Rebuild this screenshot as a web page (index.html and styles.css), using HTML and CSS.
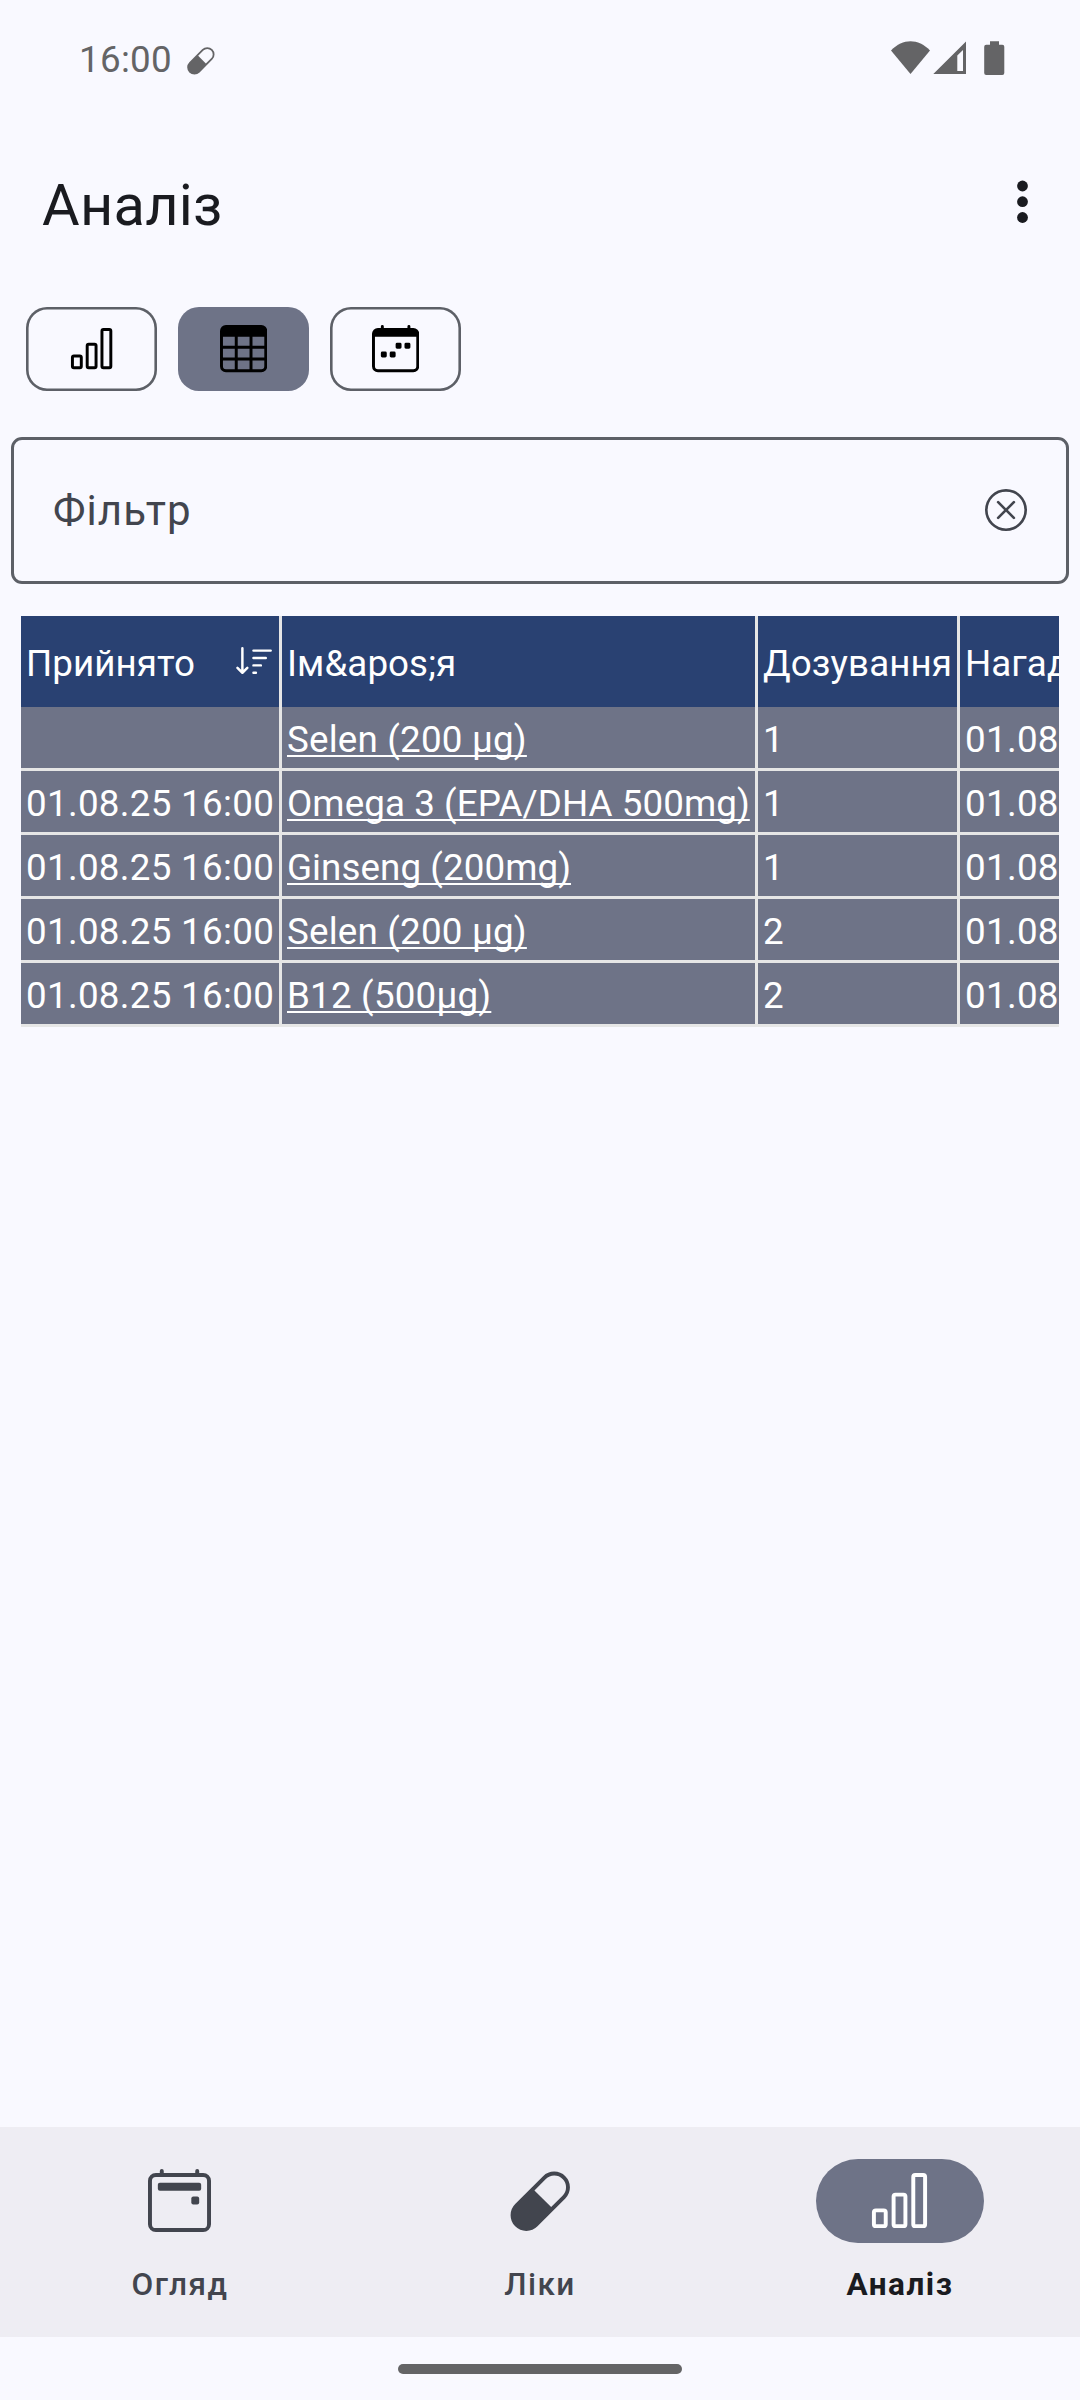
FILE: index.html
```html
<!DOCTYPE html>
<html lang="uk">
<head>
<meta charset="utf-8">
<title>Аналіз</title>
<link rel="stylesheet" href="styles.css">
</head>
<body>
<div class="screen">
  <div class="status-bar">
    <span class="clock">16:00</span>
    <svg class="status-pill" viewBox="0 0 16 16"><path d="M1.828 8.9 8.9 1.827a4 4 0 1 1 5.657 5.657l-7.07 7.071A4 4 0 1 1 1.827 8.9Zm9.128.771 2.893-2.893a3 3 0 1 0-4.243-4.242L6.713 5.429z"/></svg>
    <svg class="status-icons" viewBox="0 0 116 36">
      <path d="M0 9.5C12-2.7 27-2.7 39 9.5L19.5 33Z"/>
      <path fill-rule="evenodd" d="M42.3 33 75 0.500V33ZM66.300 14.500V30H72V9Z"/>
      <path d="M99 0.300h9V3.700h3.300a2 2 0 0 1 2 2V32a2 2 0 0 1-2 2H95.200a2 2 0 0 1-2-2V5.700a2 2 0 0 1 2-2H99Z"/>
    </svg>
  </div>

  <header class="app-bar">
    <h1 class="title">Аналіз</h1>
    <svg class="more" viewBox="0 0 12 44"><circle cx="5.500" cy="6" r="5.4"/><circle cx="5.500" cy="21.700" r="5.4"/><circle cx="5.500" cy="37.500" r="5.4"/></svg>
  </header>

  <div class="chips">
    <div class="chip">
      <svg class="chip-icon" viewBox="0 0 16 16"><g class="outline"><rect x="1.5" y="10.5" width="3" height="4" rx=".5"/><rect x="6.5" y="6.500" width="3" height="8" rx=".5"/><rect x="11.5" y="1.5" width="3" height="13" rx=".5"/></g></svg>
    </div>
    <div class="chip chip-selected">
      <svg class="chip-icon" viewBox="0 0 16 16"><path fill-rule="evenodd" d="M2 0h12a2 2 0 0 1 2 2v12a2 2 0 0 1-2 2H2a2 2 0 0 1-2-2V2a2 2 0 0 1 2-2ZM1 4v3h4V4ZM6 4v3h4V4ZM11 4v3h4V4ZM1 8v3h4V8ZM6 8v3h4V8ZM11 8v3h4V8ZM1 12v2a1 1 0 0 0 1 1h3v-3ZM6 12v3h4v-3ZM11 12v3h3a1 1 0 0 0 1-1v-2Z"/></svg>
    </div>
    <div class="chip">
      <svg class="chip-icon" viewBox="0 0 16 16"><path d="M11 6.500a.5.5 0 0 1 .5-.5h1a.5.5 0 0 1 .5.5v1a.5.5 0 0 1-.5.5h-1a.5.5 0 0 1-.5-.5zm-3 0a.5.5 0 0 1 .5-.5h1a.5.5 0 0 1 .5.5v1a.5.5 0 0 1-.5.5h-1a.5.5 0 0 1-.5-.5zm-5 3a.5.5 0 0 1 .5-.5h1a.5.5 0 0 1 .5.5v1a.5.5 0 0 1-.5.5h-1a.5.5 0 0 1-.5-.5zm3 0a.5.5 0 0 1 .5-.5h1a.5.5 0 0 1 .5.5v1a.5.5 0 0 1-.5.5h-1a.5.5 0 0 1-.5-.5z"/><path d="M3.5 0a.5.5 0 0 1 .5.5V1h8V.5a.5.5 0 0 1 1 0V1h1a2 2 0 0 1 2 2v11a2 2 0 0 1-2 2H2a2 2 0 0 1-2-2V3a2 2 0 0 1 2-2h1V.5a.5.5 0 0 1 .5-.5M1 4v10a1 1 0 0 0 1 1h12a1 1 0 0 0 1-1V4z"/></svg>
    </div>
  </div>

  <div class="filter">
    <span class="filter-label">Фільтр</span>
    <svg class="filter-clear" viewBox="0 0 16 16"><path d="M8 15A7 7 0 1 1 8 1a7 7 0 0 1 0 14m0 1A8 8 0 1 0 8 0a8 8 0 0 0 0 16"/><path d="M4.646 4.646a.5.5 0 0 1 .708 0L8 7.293l2.646-2.647a.5.5 0 0 1 .708.708L8.707 8l2.647 2.646a.5.5 0 0 1-.708.708L8 8.707l-2.646 2.647a.5.5 0 0 1-.708-.708L7.293 8 4.646 5.354a.5.5 0 0 1 0-.708"/></svg>
  </div>

  <div class="table">
    <div class="row head">
      <div class="cell"><span>Прийнято</span><svg class="sort" viewBox="0 0 16 16"><path d="M3.500 2.500a.5.5 0 0 0-1 0v8.793l-1.146-1.147a.5.5 0 0 0-.708.708l2 1.999.007.007a.497.497 0 0 0 .7-.006l2-2a.5.5 0 0 0-.707-.708L3.500 11.293zm3.500 1a.5.5 0 0 1 .5-.5h7a.5.5 0 0 1 0 1h-7a.5.5 0 0 1-.5-.5M7.500 6a.5.5 0 0 0 0 1h5a.5.5 0 0 0 0-1zm0 3a.5.5 0 0 0 0 1h3a.5.5 0 0 0 0-1zm0 3a.5.5 0 0 0 0 1h1a.5.5 0 0 0 0-1z"/></svg></div>
      <div class="cell">Ім&amp;apos;я</div>
      <div class="cell dose-title">Дозування</div>
      <div class="cell">Нагадування</div>
    </div>
    <div class="row"><div class="cell"></div><div class="cell"><span class="link wide">Selen (200 µg)</span></div><div class="cell">1</div><div class="cell date">01.08</div></div>
    <div class="row"><div class="cell date">01.08.25 16:00</div><div class="cell"><span class="link">Omega 3 (EPA/DHA 500mg)</span></div><div class="cell">1</div><div class="cell date">01.08</div></div>
    <div class="row"><div class="cell date">01.08.25 16:00</div><div class="cell"><span class="link">Ginseng (200mg)</span></div><div class="cell">1</div><div class="cell date">01.08</div></div>
    <div class="row"><div class="cell date">01.08.25 16:00</div><div class="cell"><span class="link wide">Selen (200 µg)</span></div><div class="cell">2</div><div class="cell date">01.08</div></div>
    <div class="row"><div class="cell date">01.08.25 16:00</div><div class="cell"><span class="link wide">B12 (500µg)</span></div><div class="cell">2</div><div class="cell date">01.08</div></div>
  </div>

  <nav class="nav">
    <div class="nav-item">
      <div class="indicator"><svg class="nav-icon" viewBox="0 0 16 16"><g class="outline"><rect x=".5" y="1.5" width="15" height="14" rx="1.500"/><path stroke-linecap="round" d="M3.500 .5V1.500M12.500 .5V1.500"/></g><rect x="2.500" y="3.500" width="11" height="2" rx=".5"/><rect x="11" y="7" width="2" height="2" rx=".5"/></svg></div>
      <span class="nav-label">Огляд</span>
    </div>
    <div class="nav-item">
      <div class="indicator"><svg class="nav-icon" viewBox="0 0 16 16"><path d="M1.828 8.9 8.9 1.827a4 4 0 1 1 5.657 5.657l-7.07 7.071A4 4 0 1 1 1.827 8.9Zm9.128.771 2.893-2.893a3 3 0 1 0-4.243-4.242L6.713 5.429z"/></svg></div>
      <span class="nav-label">Ліки</span>
    </div>
    <div class="nav-item nav-active">
      <div class="indicator"><svg class="nav-icon" viewBox="0 0 16 16"><g class="outline"><rect x="1.5" y="10.5" width="3" height="4" rx=".5"/><rect x="6.5" y="6.500" width="3" height="8" rx=".5"/><rect x="11.5" y="1.5" width="3" height="13" rx=".5"/></g></svg></div>
      <span class="nav-label">Аналіз</span>
    </div>
  </nav>
  <div class="gesture"><div class="handle"></div></div>
</div>
</body>
</html>
```
FILE: styles.css
```css
* { box-sizing: border-box; }
body { margin: 0; background: #f9f9ff; font-family: Roboto, sans-serif; }
svg { display: block; flex: none; fill: currentColor; }
.outline { fill: none; stroke: currentColor; stroke-width: 1; }

.screen { width: 1080px; height: 2400px; display: flex; flex-direction: column; overflow: hidden; color: #1a1b20; }

.status-bar { height: 118px; padding: 0 73px 0 79px; display: flex; align-items: center; color: #646466; }
.clock { padding-top: 2px; font-size: 36.75px; line-height: 44px; letter-spacing: 0.3px; }
.status-pill { width: 29px; height: 29px; margin: 3px 0 0 14px; }
.status-icons { width: 116px; height: 36px; margin-left: auto; }

.app-bar { height: 168px; padding: 0 51px 0 42px; display: flex; align-items: center; justify-content: space-between; }
.title { margin: 0; padding-top: 6px; font-size: 57.75px; line-height: 68px; font-weight: 400; letter-spacing: 0.25px; }
.more { width: 12px; height: 44px; }

.chips { display: flex; gap: 21px; padding: 21px 26px 0; }
.chip { width: 131px; height: 84px; border-radius: 21px; display: flex; align-items: center; justify-content: center; color: #000; box-shadow: inset 0 0 0 2.600px #5d6067; }
.chip-selected { background: #6e7387; box-shadow: none; }
.chip-icon { width: 47.25px; height: 47.25px; }

.filter { margin: 46px 11px 0; height: 147px; padding: 0 39px; border: 3px solid #5d6067; border-radius: 11px; display: flex; align-items: center; justify-content: space-between; color: #42454e; }
.filter-label { font-size: 42px; letter-spacing: 1.1px; }
.filter-clear { width: 42px; height: 42px; margin-bottom: 1px; }

.table { margin: 32px 21px 0; overflow: hidden; color: #fff; font-size: 36.75px; line-height: 43px; }
.row { display: grid; grid-template-columns: 258px 473px 199px 99px; column-gap: 3px; height: 64px; padding-bottom: 3px; background: #e6e6e6; }
.cell { display: flex; align-items: center; justify-content: space-between; padding: 3px 5px 0; background: #6e7387; letter-spacing: 0.07px; white-space: nowrap; overflow: hidden; }
.head { height: 91px; padding-bottom: 0; }
.head .cell { background: #294172; }
.sort { width: 39.4px; height: 39.4px; margin-bottom: 3px; }
.date { letter-spacing: 0.3px; }
.dose-title { letter-spacing: 0.1px; }
.link { text-decoration: underline; text-decoration-skip-ink: none; text-decoration-thickness: 2px; text-underline-offset: 3px; }
.wide { letter-spacing: 0.2px; }

.nav { margin-top: auto; height: 210px; display: flex; background: #eeedf3; color: #42454e; }
.nav-item { flex: 1; display: flex; flex-direction: column; align-items: center; padding-top: 32px; }
.indicator { width: 168px; height: 84px; padding: 0 1px 1px 0; border-radius: 42px; display: flex; align-items: center; justify-content: center; }
.nav-icon { width: 63px; height: 63px; }
.nav-label { margin-top: 23px; font-size: 31.5px; line-height: 37px; font-weight: 500; letter-spacing: 1.5px; }
.nav-active .indicator { background: #6e7387; color: #fff; }
.nav-active .nav-label { color: #1a1b20; font-weight: 700; }

.gesture { height: 63px; padding-top: 27px; display: flex; justify-content: center; }
.handle { width: 284px; height: 10px; border-radius: 5px; background: #646466; }
```
